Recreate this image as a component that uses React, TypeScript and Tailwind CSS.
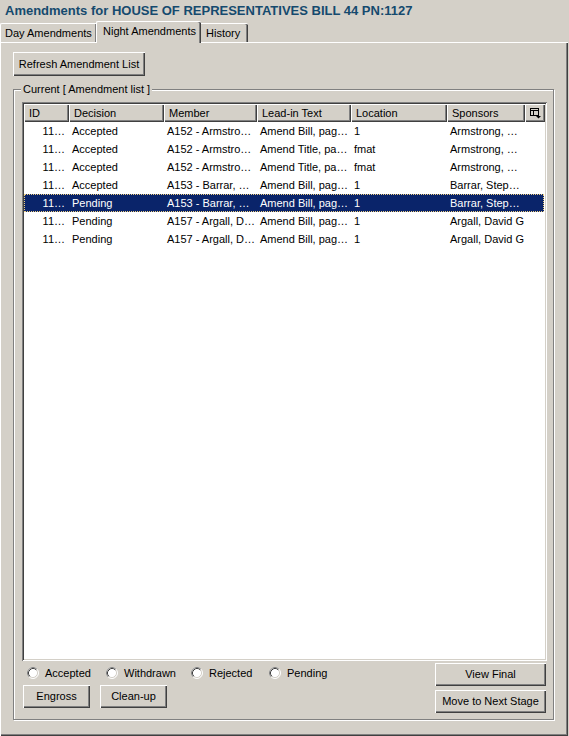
import React from "react";

const raised =
  "shadow-[inset_1px_1px_0_#ffffff,inset_-1px_-1px_0_#404040,inset_-2px_-2px_0_#808080]";
const btn =
  "flex items-center justify-center bg-[#d4d0c8] text-[11px] text-black h-[23px] " +
  raised;

type Row = [string, string, string, string, string, string];

const rows: Row[] = [
  ["11…", "Accepted", "A152 - Armstro…", "Amend Bill, pag…", "1", "Armstrong, …"],
  ["11…", "Accepted", "A152 - Armstro…", "Amend Title, pa…", "fmat", "Armstrong, …"],
  ["11…", "Accepted", "A152 - Armstro…", "Amend Title, pa…", "fmat", "Armstrong, …"],
  ["11…", "Accepted", "A153 - Barrar, …", "Amend Bill, pag…", "1", "Barrar, Step…"],
  ["11…", "Pending", "A153 - Barrar, …", "Amend Bill, pag…", "1", "Barrar, Step…"],
  ["11…", "Pending", "A157 - Argall, D…", "Amend Bill, pag…", "1", "Argall, David G"],
  ["11…", "Pending", "A157 - Argall, D…", "Amend Bill, pag…", "1", "Argall, David G"],
];

const widths = ["w-[45px]", "w-[95px]", "w-[93px]", "w-[94px]", "w-[96px]", "w-[78px]"];
const headers = ["ID", "Decision", "Member", "Lead-in Text", "Location", "Sponsors"];

function Radio({ label, w }: { label: string; w: string }) {
  return (
    <div className={`flex items-center gap-[6px] ${w}`}>
      <svg width="12" height="12" viewBox="0 0 12 12" className="shrink-0">
        <circle cx="6" cy="6" r="5" fill="#ffffff" />
        <circle cx="6" cy="6" r="5.5" fill="none" stroke="#ffffff" strokeWidth="1" />
        <path d="M2.11 9.89 A5.5 5.5 0 0 1 9.89 2.11" fill="none" stroke="#808080" strokeWidth="1" />
        <path d="M2.82 9.18 A4.5 4.5 0 0 0 9.18 2.82" fill="none" stroke="#d4d0c8" strokeWidth="1" />
        <path d="M2.82 9.18 A4.5 4.5 0 0 1 9.18 2.82" fill="none" stroke="#404040" strokeWidth="1" />
      </svg>
      <span className="text-[11px] leading-[14px] text-black whitespace-nowrap">{label}</span>
    </div>
  );
}

function ColumnIcon() {
  return (
    <svg width="12" height="11" viewBox="0 0 12 11">
      <rect x="0.5" y="0.5" width="8" height="7" fill="none" stroke="#000" strokeWidth="1" />
      <line x1="0.5" y1="2.5" x2="8.5" y2="2.5" stroke="#000" strokeWidth="1" />
      <line x1="3.5" y1="2.5" x2="3.5" y2="7.5" stroke="#000" strokeWidth="1" />
      <path d="M6 8 L11 8 L8.5 10.5 Z" fill="#000" />
    </svg>
  );
}

export default function App() {
  return (
    <div className="w-[569px] h-[736px] overflow-hidden bg-[#d4d0c8] font-['Liberation_Sans',Arial,sans-serif] text-[11px] text-black">
      {/* Title */}
      <div className="h-[21px] pl-[5px] text-[13px] font-bold leading-[21px] text-[#154a6e] whitespace-nowrap">
        Amendments for HOUSE OF REPRESENTATIVES BILL 44 PN:1127
      </div>

      {/* Tabs */}
      <div className="flex h-[21px] items-end">
        <div className="h-[19px] w-[96px] rounded-tl-[2px] border-l border-t border-white pl-[4px] leading-[18px] shadow-[inset_-1px_0_0_#808080]">
          Day Amendments
        </div>
        <div className="relative z-10 -mb-px h-[22px] w-[105px] rounded-t-[2px] border-l border-t border-white bg-[#d4d0c8] pl-[6px] leading-[19px] shadow-[inset_-1px_0_0_#404040,inset_-2px_0_0_#808080]">
          Night Amendments
        </div>
        <div className="h-[19px] w-[47px] rounded-tr-[2px] border-t border-white pl-[5px] leading-[18px] shadow-[inset_-1px_0_0_#404040,inset_-2px_0_0_#808080]">
          History
        </div>
      </div>

      {/* Panel */}
      <div className="h-[694px] w-[568px] pl-[13px] pt-[10px] shadow-[inset_1px_1px_0_#ffffff,inset_-1px_-1px_0_#404040,inset_-2px_-2px_0_#808080]">
        <button className={`${btn} w-[132px] h-[24px]`}>Refresh Amendment List</button>

        {/* Group box */}
        <div className="relative mt-[13px] h-[631px] w-[541px] border border-[#808080] pl-[8px] pr-[6px] pt-[12px] shadow-[1px_1px_0_#ffffff,inset_1px_1px_0_#ffffff]">
          <div className="absolute -top-[7px] left-[7px] bg-[#d4d0c8] px-[2px] leading-[13px] whitespace-nowrap">
            Current [ Amendment list ]
          </div>

          {/* List view */}
          <div className="h-[559px] w-full bg-white p-[2px] shadow-[inset_1px_1px_0_#808080,inset_-1px_-1px_0_#ffffff,inset_2px_2px_0_#404040,inset_-2px_-2px_0_#d4d0c8]">
            <div className="flex h-[18px]">
              {headers.map((h, i) => (
                <div
                  key={h}
                  className={`${widths[i]} ${raised} bg-[#d4d0c8] pl-[5px] leading-[18px] whitespace-nowrap overflow-hidden`}
                >
                  {h}
                </div>
              ))}
              <div className={`w-[20px] ${raised} flex items-center justify-center bg-[#d4d0c8] pl-[1px]`}>
                <ColumnIcon />
              </div>
            </div>
            {rows.map((r, ri) => {
              const sel = ri === 4;
              return (
                <div
                  key={ri}
                  className={`flex h-[18px] w-[520px] items-center ${
                    sel
                      ? "bg-[#0a246a] text-white outline outline-1 outline-dotted outline-[#f0d080] -outline-offset-1"
                      : "text-black"
                  }`}
                >
                  {r.map((c, ci) => (
                    <div
                      key={ci}
                      className={`${widths[ci]} overflow-hidden whitespace-nowrap leading-[18px] ${
                        ci === 0 ? "pr-[4px] text-right" : "pl-[3px]"
                      }`}
                    >
                      {c}
                    </div>
                  ))}
                </div>
              );
            })}
          </div>

          {/* Bottom controls */}
          <div className="flex justify-between">
            <div className="flex flex-col">
              <div className="mt-[5px] flex h-[14px] items-center pl-[5px]">
                <Radio label="Accepted" w="w-[79px]" />
                <Radio label="Withdrawn" w="w-[85px]" />
                <Radio label="Rejected" w="w-[78px]" />
                <Radio label="Pending" w="w-[60px]" />
              </div>
              <div className="mt-[5px] ml-[1px] flex gap-[10px]">
                <button className={`${btn} w-[67px]`}>Engross</button>
                <button className={`${btn} w-[67px]`}>Clean-up</button>
              </div>
            </div>
            <div className="mt-[2px] mr-[1px] flex w-[111px] flex-col gap-[4px]">
              <button className={`${btn} w-[111px]`}>View Final</button>
              <button className={`${btn} w-[111px]`}>Move to Next Stage</button>
            </div>
          </div>
        </div>
      </div>
    </div>
  );
}
